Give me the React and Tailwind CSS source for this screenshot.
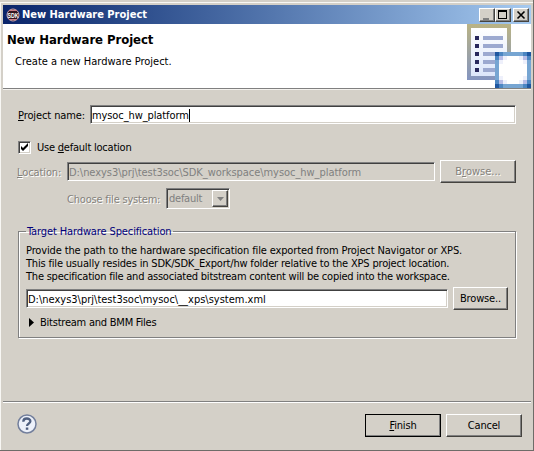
import React from "react";

const RAISED = "border border-t-white border-l-white border-r-[#45433f] border-b-[#45433f] shadow-[inset_-1px_-1px_0_#808080]";
const SUNKEN = "border border-t-[#808080] border-l-[#808080] border-r-white border-b-white shadow-[inset_1px_1px_0_#404040,inset_-1px_-1px_0_#d4d0c8]";
const ETCHED = "text-[#85827c] [text-shadow:1px_1px_0_#fff]";

function Mnemonic({ children }) {
  return <span className="underline underline-offset-1 decoration-1">{children}</span>;
}

function Button({ className = "", children }) {
  return (
    <button className={`flex shrink-0 items-center justify-center bg-[#d4d0c8] whitespace-nowrap ${RAISED} ${className}`}>
      {children}
    </button>
  );
}

function Field({ className = "", children }) {
  return (
    <div className={`flex h-[19px] shrink-0 items-center pt-px pl-[1px] whitespace-pre ${SUNKEN} ${className}`}>
      {children}
    </div>
  );
}

function SdkIcon() {
  return (
    <svg className="ml-[3px] h-[14px] w-[14px] shrink-0 overflow-visible" viewBox="0 0 14 14">
      <circle cx="7" cy="7" r="6" fill="#33151f" stroke="#d2a7ae" strokeWidth="1" />
      <path d="M3 2.5h8M3 11.5h8" stroke="#c77d86" />
      <text x="1.5" y="9.5" textLength="11" lengthAdjust="spacingAndGlyphs" fontSize="7" fontWeight="700" fill="#fff" fontFamily="Liberation Sans, sans-serif">SDK</text>
    </svg>
  );
}

function TitleBar() {
  return (
    <header className="flex h-[19px] shrink-0 items-center bg-linear-to-r from-[#0a246a] to-[#a6caf0]">
      <SdkIcon />
      <h1 className="ml-[2px] flex-1 text-[11px] font-bold whitespace-nowrap text-white">New Hardware Project</h1>
      <Button className="h-[14px] w-4">
        <svg className="h-3 w-3.5" viewBox="0 0 14 12"><path d="M3 9h6v2H3z" fill="#808080" /></svg>
      </Button>
      <Button className="h-[14px] w-4">
        <svg className="h-3 w-3.5" viewBox="0 0 14 12"><path d="M2 1h9v9H2zM3 3v6h7V3z" fill="#000" fillRule="evenodd" /></svg>
      </Button>
      <Button className="mr-[2px] ml-[2px] h-[14px] w-4">
        <svg className="h-3 w-3.5" viewBox="0 0 14 12"><path d="M3.5 2.5l7 7M10.5 2.5l-7 7" stroke="#000" strokeWidth="1.6" /></svg>
      </Button>
    </header>
  );
}

function BannerIcon() {
  return (
    <svg className="h-16 w-16 shrink-0" viewBox="0 0 64 64">
      <defs>
        <linearGradient id="frame" x1="0" y1="0" x2="0" y2="1">
          <stop offset="0" stopColor="#bab384" />
          <stop offset="1" stopColor="#8495c0" />
        </linearGradient>
        <linearGradient id="page" x1="0" y1="0" x2="0" y2="1">
          <stop offset="0" stopColor="#ffffff" />
          <stop offset="1" stopColor="#dce6fa" />
        </linearGradient>
      </defs>
      <path d="M0 0h44v56H0z" fill="url(#frame)" />
      <path d="M4 4h36v48H4z" fill="url(#page)" />
      <path d="M8 12h4v4H8zM8 20h4v4H8zM8 28h4v4H8zM8 36h4v4H8zM8 44h4v4H8z" fill="#28285c" />
      <path d="M16 12h20v4H16zM16 20h20v4H16zM16 28h20v4H16zM16 36h20v4H16zM16 44h20v4H16z" fill="#9ca9d0" />
      <path d="M28 28h36v36H28z" fill="#76a5d2" />
      <path d="M32 32h28v28H32z" fill="#fff" />
      <path d="M28 28h4v4h-4zM60 28h4v4h-4zM28 60h4v4h-4zM60 60h4v4h-4z" fill="#1f57a0" />
      <path d="M32 28h4v4h-4zM56 28h4v4h-4zM28 32h4v4h-4zM60 32h4v4h-4zM28 56h4v4h-4zM60 56h4v4h-4zM32 60h4v4h-4zM56 60h4v4h-4z" fill="#4c86c2" />
      <path d="M32 32h4v4h-4zM56 32h4v4h-4zM32 56h4v4h-4zM56 56h4v4h-4z" fill="#b7bce6" />
      <path d="M36 32h4v4h-4zM32 36h4v4h-4zM52 32h4v4h-4zM56 36h4v4h-4zM32 52h4v4h-4zM36 56h4v4h-4zM56 52h4v4h-4zM52 56h4v4h-4z" fill="#eef0fb" />
    </svg>
  );
}

export default function App() {
  return (
    <main className="flex h-[451px] w-[534px] flex-col overflow-hidden border-r border-b border-[#6e6c68] bg-[#d4d0c8] pt-[5px] pr-[2px] pl-[3px] font-['DejaVu_Sans_Condensed','DejaVu_Sans',sans-serif] text-[11px] leading-[13px] text-black shadow-[inset_0_2px_0_#d4d0c8,inset_1px_3px_0_#f8f7f4]">
      <TitleBar />
      <section className="flex h-16 shrink-0 justify-between bg-white">
        <div className="whitespace-nowrap">
          <h2 className="mt-[8px] ml-1 text-[13px] leading-4 font-bold tracking-[-0.07px]">New Hardware Project</h2>
          <p className="mt-[7px] ml-3">Create a new Hardware Project.</p>
        </div>
        <BannerIcon />
      </section>
      <div className="h-[2px] shrink-0 border-t border-[#808080] bg-[#f4f2ee]" />

      <section className="mt-[15px] flex h-[19px] shrink-0 items-center pl-[15px]">
        <label className="w-[72px] pt-px whitespace-nowrap tracking-[-0.1px]"><Mnemonic>P</Mnemonic>roject name:</label>
        <Field className="w-[426px] bg-white">
          <span className="tracking-[-0.1px]">mysoc_hw_platform</span>
          <span className="h-[13px] w-px bg-black" />
        </Field>
      </section>

      <section className="mt-[17px] flex h-[13px] shrink-0 items-center pl-[15px]">
        <span className={`h-[13px] w-[13px] shrink-0 bg-white ${SUNKEN}`}>
          <svg className="h-[11px] w-[11px]" viewBox="0 0 11 11"><path d="M2 4v3l2 2 5-5V1L4 6z" fill="#000" /></svg>
        </span>
        <label className="ml-[6px] whitespace-nowrap tracking-[-0.22px]">Use <Mnemonic>d</Mnemonic>efault location</label>
      </section>

      <section className="mt-[6px] flex h-[23px] shrink-0 items-center pl-[14px]">
        <label className={`w-[50px] pt-px whitespace-nowrap tracking-[-0.1px] ${ETCHED}`}><Mnemonic>L</Mnemonic>ocation:</label>
        <Field className="w-[368px] text-[#808080]"><span className="tracking-[-0.05px]">D:\nexys3\prj\test3soc\SDK_workspace\mysoc_hw_platform</span></Field>
        <Button className={`ml-[5px] h-[23px] w-[76px] ${ETCHED}`}><span>B<Mnemonic>r</Mnemonic>owse...</span></Button>
      </section>

      <section className="mt-[5px] flex h-[21px] shrink-0 items-center pl-[64px]">
        <label className={`w-[99px] pt-px whitespace-nowrap tracking-[-0.2px] ${ETCHED}`}>Choose file system:</label>
        <div className={`flex h-[21px] w-[64px] items-center justify-between p-[1px] pl-[2px] text-[#808080] ${SUNKEN}`}>
          <span className="tracking-[-0.25px]">default</span>
          <Button className="h-[17px] w-4"><svg className="h-1 w-[7px]" viewBox="0 0 7 4"><path d="M0 0h7L3.5 4z" fill="#808080" /></svg></Button>
        </div>
      </section>

      <fieldset className="mt-[16px] ml-[15px] flex h-[113px] w-[498px] shrink-0 flex-col border border-[#808080] pl-[7px] shadow-[1px_1px_0_#fff,inset_1px_1px_0_#fff]">
        <legend className="px-[1px] leading-[13px] tracking-[-0.12px] whitespace-nowrap text-[#00007b]">Target Hardware Specification</legend>
        <div className="mt-[6px] whitespace-nowrap">
          <p className="tracking-[-0.135px]">Provide the path to the hardware specification file exported from Project Navigator or XPS.</p>
          <p className="tracking-[-0.18px]">This file usually resides in SDK/SDK_Export/hw folder relative to the XPS project location.</p>
          <p className="tracking-[-0.22px]">The specification file and associated bitstream content will be copied into the workspace.</p>
        </div>
        <div className="mt-[4px] flex h-[23px] items-center">
          <Field className="w-[422px] bg-white"><span>D:\nexys3\prj\test3soc\mysoc\__xps\system.xml</span></Field>
          <Button className="ml-[5px] h-[23px] w-[55px] tracking-[-0.15px]">Browse..</Button>
        </div>
        <div className="mt-[6px] flex items-center pl-[3px]">
          <svg className="h-[9px] w-[5px]" viewBox="0 0 5 9"><path d="M0 0l5 4.5L0 9z" fill="#000" /></svg>
          <span className="ml-[6px] tracking-[-0.23px]">Bitstream and BMM Files</span>
        </div>
      </fieldset>

      <footer className="mt-auto flex h-[49px] shrink-0 flex-col">
        <div className="h-[2px] border-t border-[#808080] bg-white" />
        <div className="mt-[11px] flex items-start pl-[14px]">
          <svg className="h-5 w-5" viewBox="0 0 20 20">
            <circle cx="10" cy="10" r="9" fill="#edf1fa" stroke="#737f9c" strokeWidth="1.5" />
            <path d="M6.3 7.7C6.3 3.4 13.4 3.6 13.4 7.3C13.4 9.5 10 9.4 10 12" fill="none" stroke="#506080" strokeWidth="2.3" />
            <path d="M8.8 13.5h2.5v2.3H8.8z" fill="#506080" />
          </svg>
          <Button className="ml-[328px] h-[23px] w-[76px] tracking-[-0.15px] outline outline-black -outline-offset-1"><span><Mnemonic>F</Mnemonic>inish</span></Button>
          <Button className="ml-[5px] h-[23px] w-[76px] tracking-[-0.2px]">Cancel</Button>
        </div>
      </footer>
    </main>
  );
}
